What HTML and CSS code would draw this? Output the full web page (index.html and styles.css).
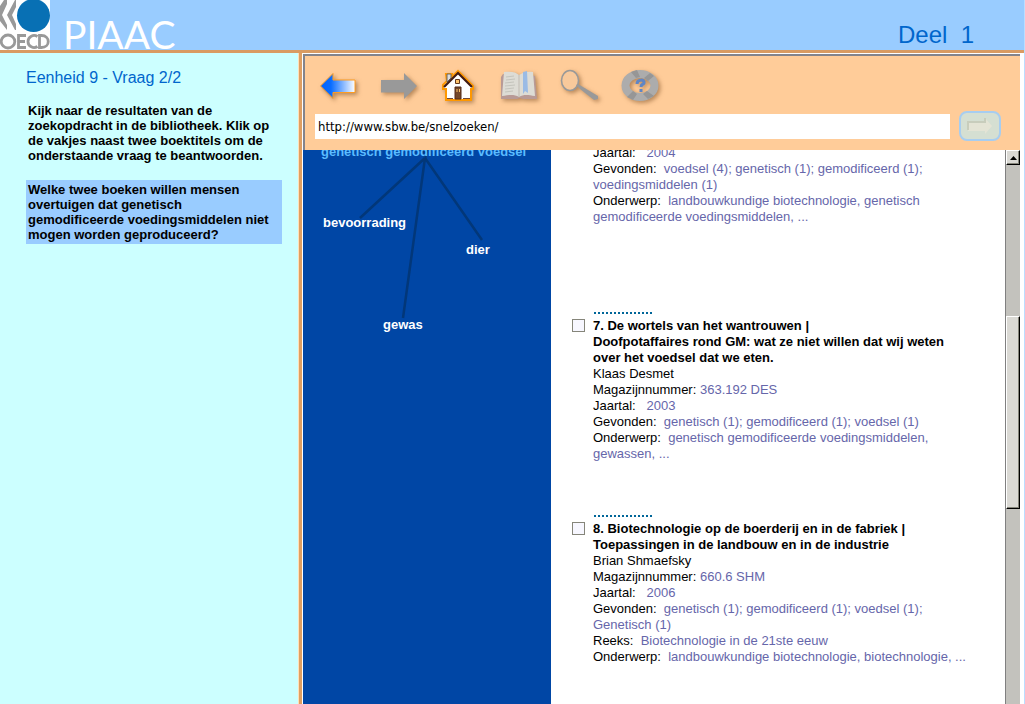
FILE: index.html
```html
<!DOCTYPE html>
<html lang="nl">
<head>
<meta charset="utf-8">
<title>PIAAC - Deel 1</title>
<link rel="stylesheet" href="styles.css">
</head>
<body>
<div class="page">
  <header class="header">
    <svg class="oecd" viewBox="0 0 50 50" role="img" aria-label="OECD">
      <rect width="50" height="50" fill="#fff"/>
      <path d="M0 6L4 0h3v4L2 15l5 10v5L0 21z" fill="#999"/>
      <path d="M7 15L15 0h1v7l-4 8 4 9v6h-1z" fill="#999"/>
      <circle cx="33.500" cy="15.500" r="16.500" fill="#0870b4"/>
      <g fill="none" stroke="#999" stroke-width="2.800">
        <ellipse cx="8" cy="41.500" rx="6.800" ry="6.500"/>
        <path d="M26 35.500h-7.500v12H26M18.500 41.500H25M37.500 36.500c-4-2.500-9.500 0-9.500 5s5.500 7.500 9.500 5M39.500 35.500h2c9 0 9 12 0 12h-2z"/>
      </g>
    </svg>
    <h1 class="brand">PIAAC</h1>
    <p class="section">Deel&nbsp; 1</p>
  </header>

  <div class="body">
    <aside class="question">
      <h2 class="unit">Eenheid 9 - Vraag 2/2</h2>
      <p class="instruction">Kijk naar de resultaten van de<br>zoekopdracht in de bibliotheek. Klik op<br>de vakjes naast twee boektitels om de<br>onderstaande vraag te beantwoorden.</p>
      <p class="task">Welke twee boeken willen mensen<br>overtuigen dat genetisch<br>gemodificeerde voedingsmiddelen niet<br>mogen worden geproduceerd?</p>
    </aside>

    <main class="browser">
      <nav class="toolbar">
        <div class="tools">
          <button class="tool" type="button" aria-label="Terug">
            <svg viewBox="0 0 44 40"><defs><linearGradient id="back"><stop offset="0" stop-color="#0063ff"/><stop offset=".3" stop-color="#086cff"/><stop offset="1" stop-color="#fff"/></linearGradient></defs><path d="M2.500 20L15 7.500v6.500h22v12.500H15v6z" fill="url(#back)" stroke="#ff9c20"/></svg>
          </button>
          <button class="tool" type="button" aria-label="Vooruit">
            <svg viewBox="0 0 44 40"><path d="M39 20L26 7v7H3v12.500h23V33z" fill="#999"/></svg>
          </button>
          <button class="tool" type="button" aria-label="Startpagina">
            <svg viewBox="0 0 44 40"><path d="M8 8h6v3l6-6 15 15v3h-2v11H8V23H5v-4l4-4z" fill="#fff" stroke="#ff9800" stroke-width="2"/><path d="M9 8h4v4l-4 4z" fill="#ddd" stroke="#666"/><path d="M6 21L20 7l14 14" fill="none" stroke="#421c14" stroke-width="2.200"/><path d="M17.500 13.500h4v4h-4z" fill="#ffc36b" stroke="#63381d"/><path d="M17 21h6v12h-6z" fill="#74482b" stroke="#552a19"/><path d="M18.500 23h1v3h-1zM21 23h1v3h-1z" fill="#ffc36b"/><path d="M9 32.500h6M25 32.500h7" stroke="#704838"/></svg>
          </button>
          <button class="tool" type="button" aria-label="Bladwijzers">
            <svg viewBox="0 0 44 40"><path d="M5 8l-2 3v22h16l3-1 3 1h14l-2-23z" fill="#b89a96"/><path d="M6 6c7-1 12 0 15 3v22c-5-3-10-2-17-1zM21 9c4-3 9-4 14-3l2 24c-7-1-11-2-16 1z" fill="#dddcd5"/><path d="M21 9v22" stroke="#c0bbb2"/><path d="M8 11l8-1M8 14l9-1M7 17l9-1M7 20l10-1M7 23l9-1M7 26l8-1" fill="none" stroke="#c4c4bc"/><path d="M25 6l4-1 1 22-3-2-2 3z" fill="#9abbe5"/></svg>
          </button>
          <button class="tool" type="button" aria-label="Zoeken">
            <svg viewBox="0 0 44 40"><ellipse cx="12" cy="14.500" rx="8.500" ry="10" fill="#f8c99b" stroke="#999" stroke-width="1.600"/><path d="M18 19l2-1 20 12v3l-4 1-14-11z" fill="#999"/></svg>
          </button>
          <button class="tool" type="button" aria-label="Help">
            <svg viewBox="0 0 44 40"><ellipse cx="22" cy="19.500" rx="14.500" ry="11.500" fill="none" stroke="#acacac" stroke-width="8"/><path d="M13 6l5 6 4-1-3-7zM32 7l-6 5 4 3 6-5zM9 31l6-6 4 3-4 6zM36 30l-7-5-4 3 5 5z" fill="#969696"/><path d="M19 18c0-5 8-5 7-1-1 2-3 1-3 4M23 23v3" fill="none" stroke="#5f86c5" stroke-width="3"/></svg>
          </button>
        </div>
        <form class="address">
          <input class="url" type="text" aria-label="Adres" value="http://www.sbw.be/snelzoeken/">
          <button class="go" type="button" aria-label="Ga">
            <svg viewBox="0 0 26 16"><path d="M1 3h17V0l7 8-7 8v-3H1z" fill="#e4e4d5"/><path d="M1 12V4h17V0" fill="none" stroke="#c8cdbc" stroke-width="2"/></svg>
          </button>
        </form>
      </nav>

      <div class="content">
        <section class="map" aria-label="Begrippenkaart">
          <svg class="links" viewBox="0 0 248 180"><path d="M122 8L57 68M122 8L100 168M122 8l57 82" fill="none" stroke="#023779" stroke-width="2.500"/><path d="M119 0h6l-2 10z" fill="#023779"/></svg>
          <span class="node root">genetisch gemodificeerd voedsel</span>
          <span class="node supply">bevoorrading</span>
          <span class="node animal">dier</span>
          <span class="node crop">gewas</span>
        </section>

        <section class="results" aria-label="Zoekresultaten">
          <article class="book partial">
            <div class="details">
              <p>Jaartal: &nbsp; <span>2004</span></p>
              <p>Gevonden: &nbsp;<span>voedsel (4); genetisch (1); gemodificeerd (1);<br>voedingsmiddelen (1)</span></p>
              <p>Onderwerp: &nbsp;<span>landbouwkundige biotechnologie, genetisch<br>gemodificeerde voedingsmiddelen, ...</span></p>
            </div>
          </article>
          <article class="book">
            <input class="check" type="checkbox" id="book7">
            <div class="details">
              <label for="book7">7. De wortels van het wantrouwen |<br>Doofpotaffaires rond GM: wat ze niet willen dat wij weten<br>over het voedsel dat we eten.</label>
              <p>Klaas Desmet</p>
              <p>Magazijnnummer: <span>363.192 DES</span></p>
              <p>Jaartal: &nbsp; <span>2003</span></p>
              <p>Gevonden: &nbsp;<span>genetisch (1); gemodificeerd (1); voedsel (1)</span></p>
              <p>Onderwerp: &nbsp;<span>genetisch gemodificeerde voedingsmiddelen,<br>gewassen, ...</span></p>
            </div>
          </article>
          <article class="book">
            <input class="check" type="checkbox" id="book8">
            <div class="details">
              <label for="book8">8. Biotechnologie op de boerderij en in de fabriek |<br>Toepassingen in de landbouw en in de industrie</label>
              <p>Brian Shmaefsky</p>
              <p>Magazijnnummer: <span>660.6 SHM</span></p>
              <p>Jaartal: &nbsp; <span>2006</span></p>
              <p>Gevonden: &nbsp;<span>genetisch (1); gemodificeerd (1); voedsel (1);<br>Genetisch (1)</span></p>
              <p>Reeks: &nbsp;<span>Biotechnologie in de 21ste eeuw</span></p>
              <p>Onderwerp: &nbsp;<span>landbouwkundige biotechnologie, biotechnologie, ...</span></p>
            </div>
          </article>
        </section>

        <div class="scrollbar">
          <button class="scroll-up" type="button" aria-label="Omhoog"><svg viewBox="0 0 7 4"><path d="M0 4h7L3.500 0z"/></svg></button>
          <div class="track-above"></div>
          <div class="thumb"></div>
          <div class="track-below"></div>
        </div>
      </div>
    </main>
  </div>
</div>
</body>
</html>
```
FILE: styles.css
```css
* { box-sizing: border-box; }

body {
  margin: 0;
  font: 13px/16px "Liberation Sans", Arial, sans-serif;
  color: #000;
}

h1, h2, p { margin: 0; }
h2 { font-weight: normal; }
button { padding: 0; border: 0; background: none; }
svg { display: block; }

.page {
  display: flex;
  flex-direction: column;
  height: 100vh;
  overflow: hidden;
  border-right: 1px solid #bbddff;
  background: #fff;
}

.header {
  display: flex;
  align-items: flex-end;
  flex: none;
  height: 53px;
  background: #99ccff;
  border-bottom: 3px solid #d99b62;
}

.oecd { width: 50px; height: 50px; }

.brand {
  margin-left: 13px;
  font: 39px/44px Lato, sans-serif;
  color: #fff;
  height: 50px;
  padding-top: 12px;
}

.section {
  margin: 0 50px 0 auto;
  font-size: 24px;
  line-height: 30px;
  color: #0066cc;
}

.body { display: flex; flex: 1; min-height: 0; }

.question {
  flex: none;
  width: 302px;
  padding: 15px 17px 0 26px;
  background: #ccffff;
  border-right: 3px solid #df9f62;
  box-shadow: inset -1px 0 #ffe0b8;
  font-weight: bold;
  line-height: 15px;
}

.unit { font-size: 16px; line-height: 20px; color: #0066cc; }
.instruction { margin-top: 15px; padding-left: 2px; }

.task {
  margin-top: 17px;
  padding: 2px;
  background: #99ccff;
  white-space: nowrap;
}

.browser {
  display: flex;
  flex-direction: column;
  flex: 1;
  min-width: 0;
  padding: 1px 4px 0 1px;
}

.toolbar {
  padding: 10px 19px 9px 10px;
  border-top: 2px solid #84848c;
  border-left: 2px solid #84848c;
  background: #ffcc99;
}

.tools { display: flex; gap: 16px; padding-left: 3px; }
.tool { width: 44px; height: 40px; }
.tool svg { width: 44px; height: 40px; filter: drop-shadow(2px 2px 2px #7a4c2488); }

.address { display: flex; align-items: center; gap: 9px; margin-top: 5px; }

.url {
  flex: 1;
  min-width: 0;
  height: 25px;
  padding: 0 3px;
  border: 0;
  background: #fff;
  font: 13px "DejaVu Sans Condensed", "DejaVu Sans", sans-serif;
  color: #000;
}

.go {
  display: grid;
  place-items: center;
  width: 42px;
  height: 30px;
  border: 2px solid #a7cdf0;
  border-radius: 8px;
  background: #d5dfd2;
}
.go svg { width: 26px; height: 16px; }

.content { display: flex; flex: 1; min-height: 0; }

.map {
  position: relative;
  flex: none;
  width: 248px;
  overflow: hidden;
  background: #0046a5;
}
.links { width: 248px; height: 180px; }
.node { position: absolute; font-weight: bold; color: #fff; white-space: nowrap; }
.root { left: 18px; top: -6px; color: #5bbcff; }
.supply { left: 20px; top: 65px; }
.animal { left: 163px; top: 92px; }
.crop { left: 80px; top: 167px; }

.results {
  flex: 1;
  min-width: 0;
  overflow: hidden;
  padding-left: 21px;
  white-space: nowrap;
}

.book { display: grid; grid-template-columns: 13px 1fr; column-gap: 8px; }
.partial { margin-top: -5px; }
.partial .details { grid-column: 2; }
.details span { color: #6666aa; }
.details label { display: block; font-weight: bold; }

.details::after {
  content: "";
  display: block;
  width: 58px;
  height: 2px;
  margin: 53px 0 4px 1px;
  background: repeating-linear-gradient(90deg, #006699 0 2px, #fff 2px 4px);
}
.partial .details::after { margin-top: 87px; }

.check {
  appearance: none;
  width: 13px;
  height: 13px;
  margin: 1px 0 0;
  border: 1px solid #85857a;
  background: #f7f7ff;
}

.scrollbar {
  display: flex;
  flex-direction: column;
  width: 15px;
  background: #c3c2bd;
  border-left: 1px solid #808080;
}
.scroll-up {
  display: grid;
  place-items: center;
  height: 15px;
}
.scroll-up svg { width: 7px; height: 4px; }
.scroll-up, .thumb {
  flex-shrink: 0;
  background: #dad9d4;
  border: 1px solid #fff;
  border-right-color: #000;
  border-bottom-color: #000;
  box-shadow: inset -1px -1px #85857a;
}
.track-above { flex: 152; }
.thumb { flex: 191; }
.track-below { flex: 196; }
```
